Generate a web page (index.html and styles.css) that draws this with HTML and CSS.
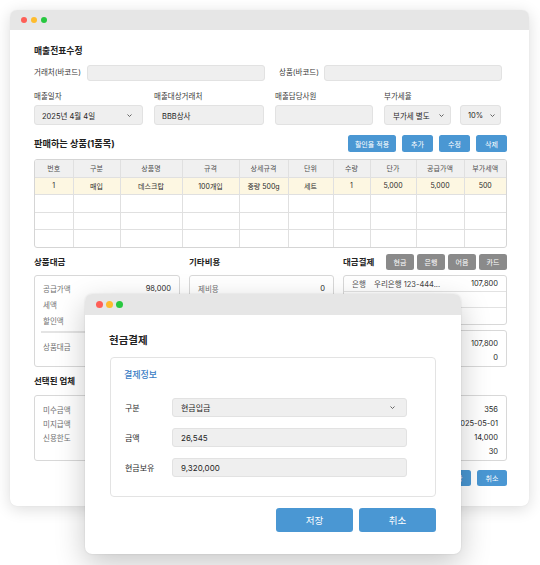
FILE: index.html
```html
<!DOCTYPE html>
<html lang="ko">
<head>
<meta charset="utf-8">
<title>매출전표수정</title>
<link rel="stylesheet" href="styles.css">
</head>
<body>
<div class="window main-win">
  <div class="titlebar"><span class="dot red"></span><span class="dot yellow"></span><span class="dot green"></span></div>
  <div class="win-body">
    <div class="page-title">매출전표수정</div>

    <div class="row1">
      <div class="inline-field"><span class="lbl">거래처(바코드)</span><div class="input"></div></div>
      <div class="inline-field second"><span class="lbl">상품(바코드)</span><div class="input"></div></div>
    </div>

    <div class="row2">
      <div class="field">
        <span class="lbl">매출일자</span>
        <div class="input select"><span>2025년 4월 4일</span><svg class="chev" viewBox="0 0 5 3"><polyline points="0.5,0.5 2.5,2.5 4.5,0.5"/></svg></div>
      </div>
      <div class="field">
        <span class="lbl">매출대상거래처</span>
        <div class="input"><span>BBB상사</span></div>
      </div>
      <div class="field">
        <span class="lbl">매출담당사원</span>
        <div class="input"></div>
      </div>
      <div class="field">
        <span class="lbl">부가세율</span>
        <div class="select-pair">
          <div class="input select"><span>부가세 별도</span><svg class="chev" viewBox="0 0 5 3"><polyline points="0.5,0.5 2.5,2.5 4.5,0.5"/></svg></div>
          <div class="input select"><span>10%</span><svg class="chev" viewBox="0 0 5 3"><polyline points="0.5,0.5 2.5,2.5 4.5,0.5"/></svg></div>
        </div>
      </div>
    </div>

    <div class="section-head">
      <span class="sec-title big-sec">판매하는 상품(1품목)</span>
      <div class="btns">
        <button class="btn blue">할인율 적용</button>
        <button class="btn blue">추가</button>
        <button class="btn blue">수정</button>
        <button class="btn blue">삭제</button>
      </div>
    </div>

    <div class="table-wrap">
      <table class="grid">
        <colgroup>
          <col style="width:38px"><col style="width:47px"><col style="width:62px"><col style="width:57px"><col style="width:49px">
          <col style="width:45px"><col style="width:37px"><col style="width:46px"><col style="width:48px"><col>
        </colgroup>
        <thead>
          <tr><th>번호</th><th>구분</th><th>상품명</th><th>규격</th><th>상세규격</th><th>단위</th><th>수량</th><th>단가</th><th>공급가액</th><th>부가세액</th></tr>
        </thead>
        <tbody>
          <tr class="sel"><td>1</td><td>매입</td><td>데스크탑</td><td>100개입</td><td>중량 500g</td><td>세트</td><td>1</td><td>5,000</td><td>5,000</td><td>500</td></tr>
          <tr><td></td><td></td><td></td><td></td><td></td><td></td><td></td><td></td><td></td><td></td></tr>
          <tr><td></td><td></td><td></td><td></td><td></td><td></td><td></td><td></td><td></td><td></td></tr>
          <tr><td></td><td></td><td></td><td></td><td></td><td></td><td></td><td></td><td></td><td></td></tr>
        </tbody>
      </table>
    </div>

    <div class="lower">
      <div class="col">
        <div class="col-head"><span class="sec-title">상품대금</span></div>
        <div class="box tall">
          <div class="kv"><span class="k">공급가액</span><span class="v">98,000</span></div>
          <div class="kv"><span class="k">세액</span><span class="v">8,900</span></div>
          <div class="kv"><span class="k">할인액</span><span class="v">0</span></div>
          <div class="kv total"><span class="k">상품대금</span><span class="v">107,800</span></div>
        </div>
      </div>
      <div class="col">
        <div class="col-head"><span class="sec-title">기타비용</span></div>
        <div class="box tall">
          <div class="kv"><span class="k">제비용</span><span class="v">0</span></div>
        </div>
      </div>
      <div class="col">
        <div class="col-head">
          <span class="sec-title">대금결제</span>
          <div class="btns gray-btns">
            <button class="btn gray">현금</button>
            <button class="btn gray">은행</button>
            <button class="btn gray">어음</button>
            <button class="btn gray">카드</button>
          </div>
        </div>
        <div class="box pay-list">
          <div class="pay-row"><span class="k">은행</span><span class="acct">우리은행 123-444...</span><span class="v">107,800</span></div>
          <div class="pay-row"></div>
          <div class="pay-row"></div>
        </div>
        <div class="box pay-sum">
          <div class="kv small"><span class="k">결제합계</span><span class="v">107,800</span></div>
          <div class="kv small"><span class="k">잔액</span><span class="v">0</span></div>
        </div>
      </div>
    </div>

    <div class="sec-title vendor-title">선택된 업체</div>
    <div class="box vendor">
      <div class="vcol">
        <div class="kv small"><span class="k">미수금액</span><span class="v">0</span></div>
        <div class="kv small"><span class="k">미지급액</span><span class="v">0</span></div>
        <div class="kv small"><span class="k">신용한도</span><span class="v">5,000,000</span></div>
      </div>
      <div class="vcol">
        <div class="kv small"><span class="k">거래건수</span><span class="v">356</span></div>
        <div class="kv small"><span class="k">최근거래일</span><span class="v">2025-05-01</span></div>
        <div class="kv small"><span class="k">평균거래액</span><span class="v">14,000</span></div>
        <div class="kv small"><span class="k">결제기일</span><span class="v">30</span></div>
      </div>
    </div>
    <div class="foot-btns">
      <button class="btn blue">저장</button>
      <button class="btn blue">취소</button>
    </div>
  </div>
</div>

<div class="window modal">
  <div class="titlebar modal-bar"><span class="dot red"></span><span class="dot yellow"></span><span class="dot green"></span></div>
  <div class="modal-body">
    <div class="modal-title">현금결제</div>
    <div class="card">
      <div class="card-title">결제정보</div>
      <div class="form-row">
        <span class="flbl">구분</span>
        <div class="finput select"><span>현금입금</span><svg class="chev" viewBox="0 0 5 3"><polyline points="0.5,0.5 2.5,2.5 4.5,0.5"/></svg></div>
      </div>
      <div class="form-row">
        <span class="flbl">금액</span>
        <div class="finput"><span>26,545</span></div>
      </div>
      <div class="form-row">
        <span class="flbl">현금보유</span>
        <div class="finput"><span>9,320,000</span></div>
      </div>
    </div>
    <div class="modal-btns">
      <button class="btn blue big">저장</button>
      <button class="btn blue big">취소</button>
    </div>
  </div>
</div>
</body>
</html>
```

FILE: styles.css
```css
* { box-sizing: border-box; }

body {
  margin: 0;
  width: 540px;
  height: 565px;
  position: relative;
  overflow: hidden;
  background: #ffffff;
  font-family: "Inter", "Noto Sans CJK KR", sans-serif;
  color: #333;
}

.window {
  position: absolute;
  background: #fff;
  border-radius: 7px;
  overflow: hidden;
}

.main-win {
  left: 10px;
  top: 10px;
  width: 519px;
  height: 496px;
  box-shadow: 0 3px 16px rgba(0, 0, 0, 0.14), 0 0 1px rgba(0, 0, 0, 0.1);
}

.titlebar {
  height: 20px;
  background: #e6e6e6;
  display: flex;
  align-items: center;
  gap: 4px;
  padding-left: 11px;
}

.dot {
  width: 6px;
  height: 6px;
  border-radius: 50%;
  display: block;
}
.dot.red { background: #fe5f57; }
.dot.yellow { background: #febc2e; }
.dot.green { background: #28c840; }

.win-body {
  padding: 15px 22px 0 24px;
}

.page-title {
  font-size: 8.8px;
  font-weight: 700;
  line-height: 12px;
  color: #222;
}

.lbl {
  font-size: 7.5px;
  color: #3a3a3a;
  line-height: 10px;
  white-space: nowrap;
}

.input {
  background: #efefef;
  border: 1px solid #e2e2e2;
  border-radius: 3px;
  display: flex;
  align-items: center;
  padding: 0 7px;
  font-size: 7.5px;
  color: #1f1f1f;
}

.select {
  justify-content: space-between;
}

.chev {
  width: 5px;
  height: 3px;
  fill: none;
  stroke: #555;
  stroke-width: 0.9;
  flex: none;
}

.row1 {
  margin-top: 8px;
  display: grid;
  grid-template-columns: 231px 1fr;
  column-gap: 11px;
}

.inline-field {
  display: flex;
  align-items: center;
  gap: 6px;
}
.inline-field .input {
  flex: 1;
  height: 16px;
}
.inline-field.second {
  padding-left: 3px;
  padding-right: 5px;
  gap: 5px;
}

.row2 {
  margin-top: 11px;
  display: grid;
  grid-template-columns: 109px 110px 98px 118px;
  column-gap: 11px;
}

.field {
  display: flex;
  flex-direction: column;
  gap: 3px;
}
.field .input {
  height: 20px;
}
.row2 .select { padding-right: 10px; }

.select-pair {
  display: grid;
  grid-template-columns: 67px 41px;
  column-gap: 9px;
}
.select-pair .input { padding: 0 6px 0 8px; }
.select-pair .input:last-child { padding: 0 5px 0 7px; }

.section-head {
  margin-top: 10px;
  height: 17px;
  display: flex;
  align-items: center;
  justify-content: space-between;
}

.sec-title {
  font-size: 8.5px;
  font-weight: 700;
  color: #222;
  line-height: 12px;
}
.sec-title.big-sec { font-size: 9.2px; }

.btns {
  display: flex;
  gap: 6px;
}

.btn {
  border: none;
  border-radius: 2.5px;
  font-family: inherit;
  color: #fff;
  font-size: 7px;
  padding: 0;
  height: 17px;
  cursor: pointer;
}
.btn.blue { background: #4a97d3; }
.btn.gray { background: #8a8a8a; }

.section-head .btn { width: 31px; }
.section-head .btn:first-child { width: 48px; }

.table-wrap {
  margin-top: 7px;
  border: 1px solid #d5d5d5;
  border-radius: 3px;
  overflow: hidden;
}

.grid {
  width: 100%;
  border-collapse: collapse;
  table-layout: fixed;
  font-size: 7px;
}
.grid th, .grid td {
  text-align: center;
  border-right: 1px solid #e0e0e0;
  border-bottom: 1px solid #e0e0e0;
  padding: 0;
  white-space: nowrap;
  overflow: hidden;
}
.grid th:last-child, .grid td:last-child { border-right: none; }
.grid tr:last-child td { border-bottom: none; }
.grid th {
  height: 17px;
  background: #f0f0f0;
  font-weight: 400;
  color: #505050;
}
.grid td {
  height: 17.5px;
  color: #2a2a2a;
}
.grid tr.sel td { background: #fdf7e2; }

.lower {
  margin-top: 6px;
  display: grid;
  grid-template-columns: 146px 145px 1fr;
  column-gap: 9px;
}

.col-head {
  height: 16px;
  display: flex;
  align-items: center;
  justify-content: space-between;
  margin-bottom: 5px;
}
.gray-btns { gap: 3px; }
.gray-btns .btn { width: 28px; height: 16px; }

.box {
  border: 1px solid #d8d8d8;
  border-radius: 3px;
  background: #fff;
}
.box.tall {
  height: 92px;
  padding: 4px 8px 0 8px;
}

.kv {
  display: flex;
  justify-content: space-between;
  align-items: center;
  height: 16px;
  font-size: 7.5px;
}
.kv .k { color: #707070; }
.kv .v { color: #2a2a2a; }
.kv.total {
  margin-top: 3px;
  border-top: 2px solid #e4e4e4;
  height: 24px;
  margin-left: -2px;
  padding-left: 2px;
  padding-top: 4px;
  align-items: center;
}
.kv.small { height: 14px; }

.pay-list { height: 50px; }
.pay-row {
  height: 16px;
  display: flex;
  align-items: center;
  padding: 0 8px;
  font-size: 7.5px;
  border-bottom: 1px solid #e2e2e2;
}
.pay-row:last-child { border-bottom: none; }
.pay-row .k { color: #555; width: 22px; }
.pay-row .acct { color: #444; flex: 1; }
.pay-row .v { color: #2a2a2a; }

.pay-sum {
  margin-top: 5px;
  height: 37px;
  padding: 5px 8px 0 8px;
}
.pay-sum .k { visibility: hidden; }

.vendor-title {
  margin-top: 8px;
}
.vendor {
  margin-top: 8px;
  height: 66px;
  padding: 6px 8px 0 8px;
  display: grid;
  grid-template-columns: 1fr 1fr;
  column-gap: 30px;
}

.foot-btns {
  margin-top: 9px;
  display: flex;
  justify-content: flex-end;
  gap: 6px;
}
.foot-btns .btn { width: 30px; height: 16px; }

/* modal */
.modal {
  left: 85px;
  top: 294px;
  width: 376px;
  height: 260px;
  box-shadow: 0 10px 30px rgba(0, 0, 0, 0.22), 0 0 2px rgba(0, 0, 0, 0.12);
}
.modal-bar {
  height: 21px;
  gap: 3px;
  padding-left: 11px;
}
.modal-bar .dot { width: 7px; height: 7px; }

.modal-body {
  padding: 19px 25px 0 25px;
}
.modal-title {
  font-size: 10.5px;
  font-weight: 600;
  color: #222;
  line-height: 14px;
  margin-left: -1px;
}
.card {
  margin-top: 9px;
  border: 1px solid #e3e3e3;
  border-radius: 4px;
  height: 140px;
  padding: 11px 28px 0 13px;
}
.card-title {
  font-size: 9px;
  color: #3b7dc4;
  line-height: 12px;
  font-weight: 500;
}
.form-row {
  display: flex;
  align-items: center;
  height: 19px;
  margin-top: 11px;
}
.card-title + .form-row { margin-top: 17px; }
.flbl {
  width: 48px;
  padding-left: 1px;
  font-size: 8px;
  color: #2a2a2a;
}
.finput {
  flex: 1;
  height: 19px;
  background: #efefef;
  border: 1px solid #e2e2e2;
  border-radius: 3px;
  display: flex;
  align-items: center;
  padding: 0 11px 0 8px;
  font-size: 8px;
  color: #1f1f1f;
}
.finput.select { justify-content: space-between; }

.modal-btns {
  margin-top: 11px;
  display: flex;
  justify-content: flex-end;
  gap: 6px;
}
.btn.big {
  width: 77px;
  height: 24px;
  font-size: 9.5px;
  border-radius: 3px;
}
```
